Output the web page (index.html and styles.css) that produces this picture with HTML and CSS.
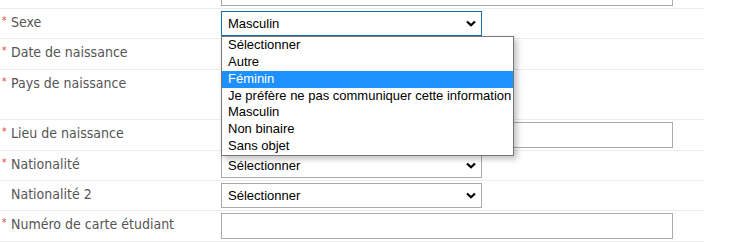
FILE: index.html
```html
<!DOCTYPE html>
<html>
<head>
  <title>Etat civil</title>
  <link rel="stylesheet" href="styles.css">
</head>
<body>
  <div class="form">
    <div class="row">
      <div class="label"></div>
      <div class="field"><div class="text"></div></div>
    </div>

    <div class="row">
      <div class="label"><span class="req">*</span>Sexe</div>
      <div class="field">
        <div class="select focus">
          <span>Masculin</span>
          <svg class="chev" width="10" height="7" viewBox="0 0 10 7"><path d="M1 1.5 L5 5.3 L9 1.5" fill="none" stroke="#000" stroke-width="2.2"/></svg>
        </div>
      </div>
    </div>

    <div class="row">
      <div class="label"><span class="req">*</span>Date de naissance</div>
      <div class="field"><div class="text short"></div></div>
    </div>

    <div class="row tall">
      <div class="label"><span class="req">*</span>Pays de naissance</div>
      <div class="field"></div>
    </div>

    <div class="row">
      <div class="label"><span class="req">*</span>Lieu de naissance</div>
      <div class="field"><div class="text"></div></div>
    </div>

    <div class="row">
      <div class="label"><span class="req">*</span>Nationalité</div>
      <div class="field">
        <div class="select">
          <span>Sélectionner</span>
          <svg class="chev" width="10" height="7" viewBox="0 0 10 7"><path d="M1 1.5 L5 5.3 L9 1.5" fill="none" stroke="#000" stroke-width="2.2"/></svg>
        </div>
      </div>
    </div>

    <div class="row">
      <div class="label"><span class="req"></span>Nationalité 2</div>
      <div class="field">
        <div class="select">
          <span>Sélectionner</span>
          <svg class="chev" width="10" height="7" viewBox="0 0 10 7"><path d="M1 1.5 L5 5.3 L9 1.5" fill="none" stroke="#000" stroke-width="2.2"/></svg>
        </div>
      </div>
    </div>

    <div class="row">
      <div class="label"><span class="req">*</span>Numéro de carte étudiant</div>
      <div class="field"><div class="text"></div></div>
    </div>

    <ul class="dropdown">
      <li>Sélectionner</li>
      <li>Autre</li>
      <li class="hover">Féminin</li>
      <li>Je préfère ne pas communiquer cette information</li>
      <li>Masculin</li>
      <li>Non binaire</li>
      <li>Sans objet</li>
    </ul>
  </div>
</body>
</html>
```

FILE: styles.css
```css
body {
  margin: 0;
  background: #fff;
  font-family: "DejaVu Sans Condensed", "DejaVu Sans", sans-serif;
  overflow: hidden;
}
.form {
  position: relative;
  width: 704px;
  margin-top: -22px;
}
.row {
  display: grid;
  grid-template-columns: 221px 1fr;
  border-bottom: 1px solid #ececec;
}
.row.tall {
  height: 49px;
}
.label {
  color: #555;
  font-size: 14px;
  padding-top: 5px;
  line-height: 17px;
  display: flex;
}
.req {
  color: #e0413a;
  font-size: 10px;
  width: 11px;
  padding-left: 2px;
  box-sizing: border-box;
  line-height: 14px;
}
.field {
  padding: 2px 0;
}
.text {
  width: 452px;
  height: 26px;
  box-sizing: border-box;
  border: 1px solid #aaa;
}
.text.short {
  width: 261px;
}
.select {
  width: 261px;
  height: 25px;
  box-sizing: border-box;
  border: 1px solid #aaa;
  display: flex;
  align-items: center;
  justify-content: space-between;
  padding: 0 5px 0 6px;
  font-family: "Liberation Sans", Arial, sans-serif;
  font-size: 13px;
  color: #000;
}
.select.focus {
  border-color: #1b6ea8;
}
.dropdown {
  position: absolute;
  left: 221px;
  top: 58px;
  width: 293px;
  box-sizing: border-box;
  margin: 0;
  padding: 0;
  list-style: none;
  background: #fff;
  border: 1px solid #767676;
  box-shadow: 3px 3px 6px rgba(0, 0, 0, 0.25);
  font-family: "Liberation Sans", Arial, sans-serif;
  font-size: 13px;
}
.dropdown li {
  height: 16.85px;
  line-height: 16px;
  padding-left: 6px;
  white-space: nowrap;
}
.dropdown li.hover {
  background: #1e90ff;
  color: #fff;
}
```
